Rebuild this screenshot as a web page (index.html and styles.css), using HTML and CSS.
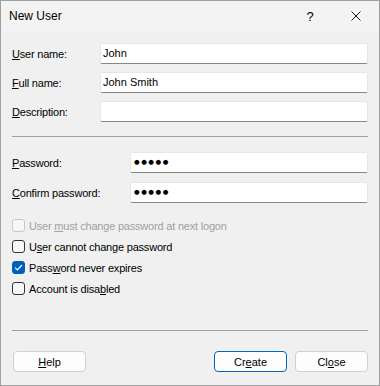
FILE: index.html
```html
<!DOCTYPE html>
<html lang="en">
<head>
  <meta charset="UTF-8" />
  <meta name="viewport" content="width=device-width, initial-scale=1" />
  <title>New User</title>
  <link rel="stylesheet" href="styles.css">
</head>
<body>

<div class="dialog">
  <div class="titlebar">
    <span class="title">New User</span>
    <div class="caption-buttons">
      <span class="caption-btn help-glyph">?</span>
      <span class="caption-btn">
        <svg width="10" height="10" viewBox="0 0 10 10">
          <path d="M0.5 0.5 L9.5 9.5 M9.5 0.5 L0.5 9.5" stroke="#1a1a1a" stroke-width="1" fill="none" />
        </svg>
      </span>
    </div>
  </div>

  <div class="content">
    <div class="form-grid names">
      <label><u>U</u>ser name:</label>
      <div class="field">John</div>
      <label><u>F</u>ull name:</label>
      <div class="field">John Smith</div>
      <label><u>D</u>escription:</label>
      <div class="field"></div>
    </div>

    <hr class="sep">

    <div class="form-grid passwords">
      <label><u>P</u>assword:</label>
      <div class="field dots">&#9679;&#9679;&#9679;&#9679;&#9679;</div>
      <label><u>C</u>onfirm password:</label>
      <div class="field dots">&#9679;&#9679;&#9679;&#9679;&#9679;</div>
    </div>

    <div class="checks">
      <div class="check disabled">
        <span class="box"></span>
        <span class="check-text">User <u>m</u>ust change password at next logon</span>
      </div>
      <div class="check">
        <span class="box"></span>
        <span class="check-text">U<u>s</u>er cannot change password</span>
      </div>
      <div class="check">
        <span class="box checked">
          <svg width="9" height="7" viewBox="0 0 9 7"><path d="M1 3.6 L3.4 6 L8 1" stroke="#fff" stroke-width="1.2" fill="none" /></svg>
        </span>
        <span class="check-text">Pass<u>w</u>ord never expires</span>
      </div>
      <div class="check">
        <span class="box"></span>
        <span class="check-text">Account is disa<u>b</u>led</span>
      </div>
    </div>

    <hr class="sep bottom-sep">

    <div class="buttons">
      <button class="btn help-btn"><u>H</u>elp</button>
      <button class="btn default">Cr<u>e</u>ate</button>
      <button class="btn">Cl<u>o</u>se</button>
    </div>
  </div>
</div>

</body>
</html>
```

FILE: styles.css
```css
* {
  margin: 0;
  padding: 0;
  box-sizing: border-box;
}

body {
  font-family: "Liberation Sans", Arial, sans-serif;
  font-size: 11px;
  color: #000;
  background: #f0f0f0;
}

.dialog {
  width: 380px;
  height: 386px;
  border: 1px solid #a0a0a0;
  background: #f0f0f0;
  display: flex;
  flex-direction: column;
}

.titlebar {
  height: 30px;
  display: flex;
  align-items: center;
  padding-left: 8px;
  background: #f3f3f3;
}

.title {
  font-size: 12px;
}

.caption-buttons {
  margin-left: auto;
  display: flex;
  height: 100%;
}

.caption-btn {
  width: 46px;
  height: 100%;
  display: flex;
  align-items: center;
  justify-content: center;
}

.help-glyph {
  font-size: 13px;
}

.content {
  padding: 0 11px;
}

.form-grid {
  display: grid;
  grid-auto-rows: 21px;
  align-items: center;
}

.names {
  margin-top: 12px;
  grid-template-columns: 88px 1fr;
  row-gap: 8px;
}

.passwords {
  margin-top: 15px;
  grid-template-columns: 118px 1fr;
  row-gap: 9px;
}

label {
  letter-spacing: -0.2px;
}

.field {
  height: 21px;
  background: #fff;
  border: 1px solid #e6e6e6;
  border-bottom-color: #868686;
  border-radius: 2px;
  padding-left: 2px;
  line-height: 19px;
  font-size: 11px;
}

.dots {
  font-family: "DejaVu Sans", sans-serif;
  font-size: 6.5px;
  letter-spacing: 1.5px;
  padding-left: 3px;
}

.sep {
  border: none;
  border-top: 1px solid #a0a0a0;
  margin-top: 14px;
}

.checks {
  margin-top: 12px;
}

.check {
  height: 21px;
  display: flex;
  align-items: center;
  gap: 4px;
}

.check-text {
  letter-spacing: -0.2px;
}

.box {
  width: 13px;
  height: 13px;
  border: 1px solid #333;
  border-radius: 3px;
  background: #f7f7f7;
  display: flex;
  align-items: center;
  justify-content: center;
  flex-shrink: 0;
}

.box.checked {
  background: #005fb8;
  border-color: #005fb8;
}

.disabled {
  color: #a0a0a0;
}

.disabled .box {
  border-color: #c8c8c8;
}

.bottom-sep {
  margin-top: 31px;
}

.buttons {
  margin-top: 20px;
  display: flex;
  gap: 8px;
}

.btn {
  width: 73px;
  height: 21px;
  font-family: inherit;
  font-size: 11px;
  color: #000;
  background: #fdfdfd;
  border: 1px solid #d0d0d0;
  border-radius: 4px;
}

.help-btn {
  margin-left: 1px;
  margin-right: auto;
}

.btn.default {
  border-color: #0067c0;
}
```
